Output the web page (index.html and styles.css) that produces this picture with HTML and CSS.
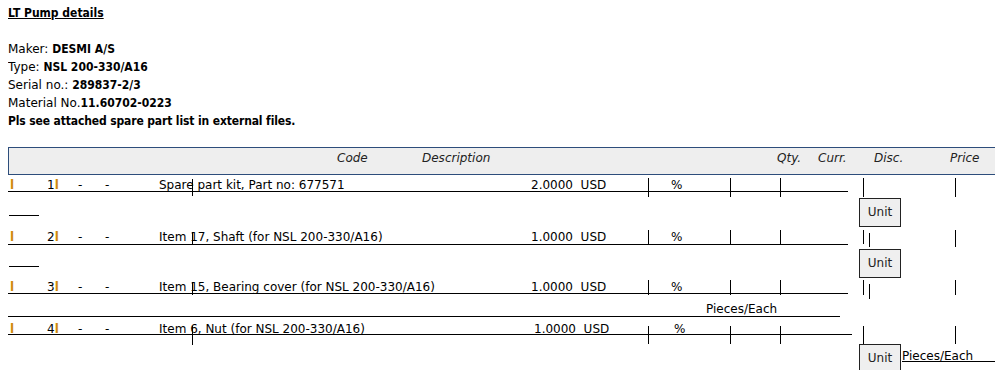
FILE: index.html
```html
<!DOCTYPE html>
<html lang="en">
<head>
<meta charset="utf-8">
<title>LT Pump details</title>
<link rel="stylesheet" href="styles.css">
</head>
<body>
<div class="page">
  <p class="title">LT Pump details</p>
  <div class="info">
    <div>Maker: <b>DESMI A/S</b></div>
    <div>Type: <b>NSL 200-330/A16</b></div>
    <div>Serial no.: <b>289837-2/3</b></div>
    <div>Material No.<b>11.60702-0223</b></div>
    <div><b class="note">Pls see attached spare part list in external files.</b></div>
  </div>

  <div class="head">
    <span class="h h-code">Code</span>
    <span class="h h-desc">Description</span>
    <span class="h h-qty">Qty.</span>
    <span class="h h-curr">Curr.</span>
    <span class="h h-disc">Disc.</span>
    <span class="h h-price">Price</span>
  </div>

  <div class="item item-1">
    <span class="c c-link"><span class="lnk">l</span></span>
    <span class="c c-no">1<span class="lnk">l</span></span>
    <span class="c c-d1">-</span>
    <span class="c c-d2">-</span>
    <span class="c c-desc">Spare part kit, Part no: 677571</span>
    <span class="c c-qty">2.0000&nbsp; USD</span>
    <span class="tk tk-main"></span>
    <span class="c c-pct">%</span>
    <span class="tk tk-main"></span>
    <span class="sp sp-a"></span>
    <span class="tk tk-main"></span>
    <span class="sp sp-b"></span>
    <span class="tk tk-main"></span>
    <span class="sp sp-c"></span>
    <span class="tk tk-main"></span>
  </div>
  <div class="gap gap-1"><span class="stub"></span><span class="unit-btn">Unit</span></div>

  <div class="item item-2">
    <span class="c c-link"><span class="lnk">l</span></span>
    <span class="c c-no">2<span class="lnk">l</span></span>
    <span class="c c-d1">-</span>
    <span class="c c-d2">-</span>
    <span class="c c-desc">Item 17, Shaft (for NSL 200-330/A16)</span>
    <span class="c c-qty">1.0000&nbsp; USD</span>
    <span class="tk tk-main"></span>
    <span class="c c-pct">%</span>
    <span class="tk tk-main"></span>
    <span class="sp sp-a"></span>
    <span class="tk tk-main"></span>
    <span class="sp sp-b"></span>
    <span class="tk tk-main"></span>
    <span class="sp sp-d"></span>
    <span class="tk tk-second"></span>
    <span class="sp sp-e"></span>
    <span class="tk tk-price"></span>
  </div>
  <div class="gap gap-2"><span class="stub"></span><span class="unit-btn">Unit</span></div>

  <div class="item item-3">
    <span class="c c-link"><span class="lnk">l</span></span>
    <span class="c c-no">3<span class="lnk">l</span></span>
    <span class="c c-d1">-</span>
    <span class="c c-d2">-</span>
    <span class="c c-desc">Item 15, Bearing cover (for NSL 200-330/A16)</span>
    <span class="c c-qty">1.0000&nbsp; USD</span>
    <span class="tk tk-main"></span>
    <span class="c c-pct">%</span>
    <span class="tk tk-main"></span>
    <span class="sp sp-a"></span>
    <span class="tk tk-main"></span>
    <span class="sp sp-b"></span>
    <span class="tk tk-main"></span>
    <span class="sp sp-d"></span>
    <span class="tk tk-second"></span>
    <span class="sp sp-e"></span>
    <span class="tk tk-price"></span>
  </div>
  <div class="pieces">Pieces/Each</div>

  <div class="item item-4">
    <span class="c c-link"><span class="lnk">l</span></span>
    <span class="c c-no">4<span class="lnk">l</span></span>
    <span class="c c-d1">-</span>
    <span class="c c-d2">-</span>
    <span class="c c-desc">Item 6, Nut (for NSL 200-330/A16)</span>
    <span class="c c-qty">1.0000&nbsp; USD</span>
    <span class="tk tk-main"></span>
    <span class="c c-pct">%</span>
    <span class="tk tk-main"></span>
    <span class="sp sp-a"></span>
    <span class="tk tk-main"></span>
    <span class="sp sp-b"></span>
    <span class="tk tk-main"></span>
    <span class="sp sp-c"></span>
    <span class="tk tk-main"></span>
  </div>
  <div class="bottom"><span class="unit-btn">Unit</span><span class="pieces-link">Pieces/Each</span></div>
</div>
</body>
</html>
```

FILE: styles.css
```css
html, body {
  overflow: hidden;
}
body {
  margin: 4px 0 0 8px;
  font-family: "DejaVu Sans", "Liberation Sans", sans-serif;
  font-size: 12px;
  line-height: 18px;
  color: #000;
  background: #fff;
}
b {
  font-weight: bold;
  font-stretch: condensed;
}
.note {
  letter-spacing: -0.13px;
}
.title {
  margin: 0 0 18px;
  font-weight: bold;
  font-stretch: condensed;
  text-decoration: underline;
}
.info {
  margin-bottom: 17px;
}

/* header bar */
.head {
  display: flex;
  box-sizing: border-box;
  width: calc(100% + 40px);
  height: 28px;
  padding-top: 1px;
  border: 1px solid #2d4d7b;
  background: #eeeeee;
  font-style: italic;
  color: #222;
  white-space: nowrap;
}
.h { flex: none; }
.h-code { margin-left: 328px; width: 85px; }
.h-desc { width: 355px; }
.h-qty { width: 41px; }
.h-curr { width: 56px; }
.h-disc { width: 76px; }
.h-price { width: 60px; }

/* item rows */
.item {
  --t: 1px;      /* text top */
  --u: 14px;     /* underline offset */
  --uw: 840px;   /* underline width */
  --kt: 1px;     /* tick top */
  --kh: 19px;    /* tick height */
  --st: 3px;     /* second tick top */
  --pt: 0px;     /* price tick top */
  --ph: 19px;    /* price tick height */
  --ct: 2px;     /* cursor top */
  --ch: 17px;    /* cursor height */
  --shift: 0px;
  display: flex;
  align-items: flex-start;
  height: 20px;
  white-space: nowrap;
  background: linear-gradient(#000, #000) no-repeat 0 var(--u) / var(--uw) 1px;
}
.item-1 { margin-top: 2px; height: 20px; }
.item-2 {
  height: 17px;
  --t: 0px; --u: 14px; --kt: 0px; --kh: 14px;
  --st: 3px; --pt: 0px; --ph: 17px;
  --ct: 2px; --ch: 12px;
}
.item-3 {
  height: 19px;
  --t: 0px; --u: 13px; --kt: 0px; --kh: 15px;
  --st: 4px; --pt: 0px; --ph: 15px;
  --ct: 2px; --ch: 13px;
}
.item-4 {
  height: 19px;
  --t: -4px; --u: 8px; --uw: 844px; --kt: 0px; --kh: 18px;
  --ct: 0px; --ch: 19px;
  --shift: 3px;
}
.c {
  flex: none;
  margin-top: var(--t);
  line-height: 14px;
}
.c-link { width: 37px; padding-left: 2px; }
.c-no { width: 31px; }
.c-d1 { width: 27px; }
.c-d2 { width: 54px; }
.c-desc { width: 372px; position: relative; }
.c-desc::before {
  content: "";
  position: absolute;
  left: 33px;
  top: calc(var(--ct) - var(--t));
  width: 1px;
  height: var(--ch);
  background: #000;
}
.c-qty { width: calc(117px - var(--shift)); padding-left: var(--shift); }
.c-pct { width: calc(59px - var(--shift)); padding-left: calc(22px + var(--shift)); }
.lnk { color: #d08a0c; font-weight: bold; }

.tk {
  flex: none;
  width: 1px;
  margin-top: var(--kt);
  height: var(--kh);
  background: #000;
}
.tk-second { margin-top: var(--st); }
.tk-price { margin-top: var(--pt); height: var(--ph); }
.sp { flex: none; }
.sp-a { width: 49px; }
.sp-b { width: 82px; }
.sp-c { width: 91px; }
.sp-d { width: 5px; }
.sp-e { width: 85px; }

/* spacer rows with Unit buttons */
.gap {
  display: flex;
  align-items: flex-start;
  height: 33px;
}
.stub {
  flex: none;
  width: 30px;
  height: 1px;
  margin-left: 1px;
  background: #000;
}
.gap-1 .stub { margin-top: 18px; }
.gap-2 .stub { margin-top: 19px; }
.gap .unit-btn { margin-left: 820px; }
.gap-1 .unit-btn { margin-top: 1px; }
.gap-2 .unit-btn { margin-top: 2px; }

.unit-btn {
  flex: none;
  box-sizing: border-box;
  width: 42px;
  height: 29px;
  border: 1px solid #222;
  background: #efefef;
  color: #222;
  line-height: 27px;
  text-align: center;
}

.pieces {
  width: 832px;
  box-sizing: border-box;
  height: 18px;
  padding: 3px 0 0 698px;
  line-height: 14px;
  border-bottom: 1px solid #000;
  margin-bottom: 9px;
  white-space: nowrap;
}

.bottom {
  display: flex;
  align-items: flex-start;
  margin-top: -1px;
}
.bottom .unit-btn { margin-left: 851px; }
.pieces-link {
  flex: 1;
  margin-left: 1px;
  padding-top: 5px;
  height: 12px;
  line-height: 14px;
  border-bottom: 1px solid #000;
  white-space: nowrap;
}
```
